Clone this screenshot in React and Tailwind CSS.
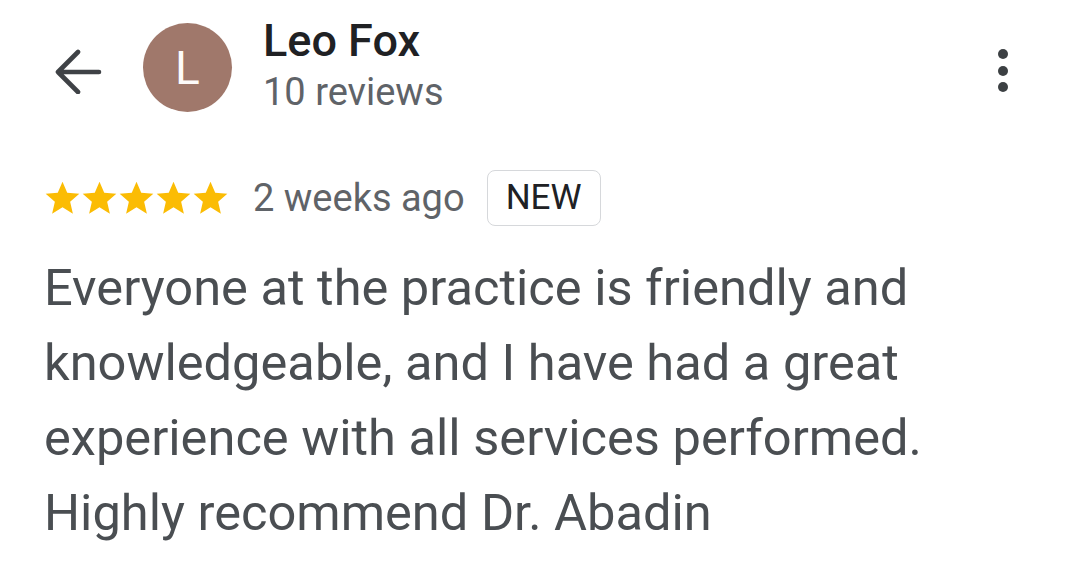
const reviewLines = [
  "Everyone at the practice is friendly and",
  "knowledgeable, and I have had a great",
  "experience with all services performed.",
  "Highly recommend Dr. Abadin",
];

const Star = () => (
  <svg width="37" height="37" viewBox="1 1 22 22">
    <path
      fill="#fbbc04"
      d="M12 17.27L18.18 21l-1.64-7.03L22 9.24l-7.19-.61L12 2 9.19 8.63 2 9.24l5.46 4.73L5.82 21z"
    />
  </svg>
);

const App = () => {
  return (
    <div className="w-[1080px] h-[572px] bg-white overflow-hidden font-['Roboto',sans-serif]">
      {/* Header */}
      <header className="flex items-start pt-[15px]">
        <svg className="ml-[53px] mt-[33px]" width="50" height="46" viewBox="0 0 50 46">
          <path
            d="M46 24H5M25 4L5 24l20 20"
            fill="none"
            stroke="#3f4246"
            strokeWidth="4.6"
            strokeLinecap="round"
            strokeLinejoin="round"
          />
        </svg>
        <div className="ml-[40px] mt-[8px] w-[89px] h-[89px] rounded-full bg-[#a0786b] flex items-center justify-center text-[#fdfbfa] text-[46px] leading-none">
          L
        </div>
        <div className="ml-[31px] flex flex-col">
          <span className="text-[45px] leading-[52px] font-medium text-[#202124]">Leo Fox</span>
          <span className="mt-[3px] text-[38px] leading-[44px] text-[#5f6368]">10 reviews</span>
        </div>
        <svg className="ml-auto mr-[71px] mt-[34px]" width="12" height="44" viewBox="0 0 12 44">
          <circle cx="6" cy="5" r="5" fill="#3c4043" />
          <circle cx="6" cy="22" r="5" fill="#3c4043" />
          <circle cx="6" cy="38" r="5" fill="#3c4043" />
        </svg>
      </header>

      {/* Rating row */}
      <div className="flex items-center ml-[44px] mt-[56px]">
        <div className="flex">
          {[0, 1, 2, 3, 4].map((i) => (
            <Star key={i} />
          ))}
        </div>
        <span className="ml-[24px] text-[38px] leading-[44px] text-[#5f6368]">2 weeks ago</span>
        <span className="ml-[22px] h-[56px] px-[18px] flex items-center border-[1.5px] border-[#d6d8db] rounded-[8px] text-[35px] text-[#202124]">
          NEW
        </span>
      </div>

      {/* Review text */}
      <div className="ml-[44px] mt-[24px] text-[50.6px] leading-[75px] text-[#4a4e52] whitespace-nowrap">
        {reviewLines.map((line, i) => (
          <div key={i}>{line}</div>
        ))}
      </div>
    </div>
  );
};

export default App;
